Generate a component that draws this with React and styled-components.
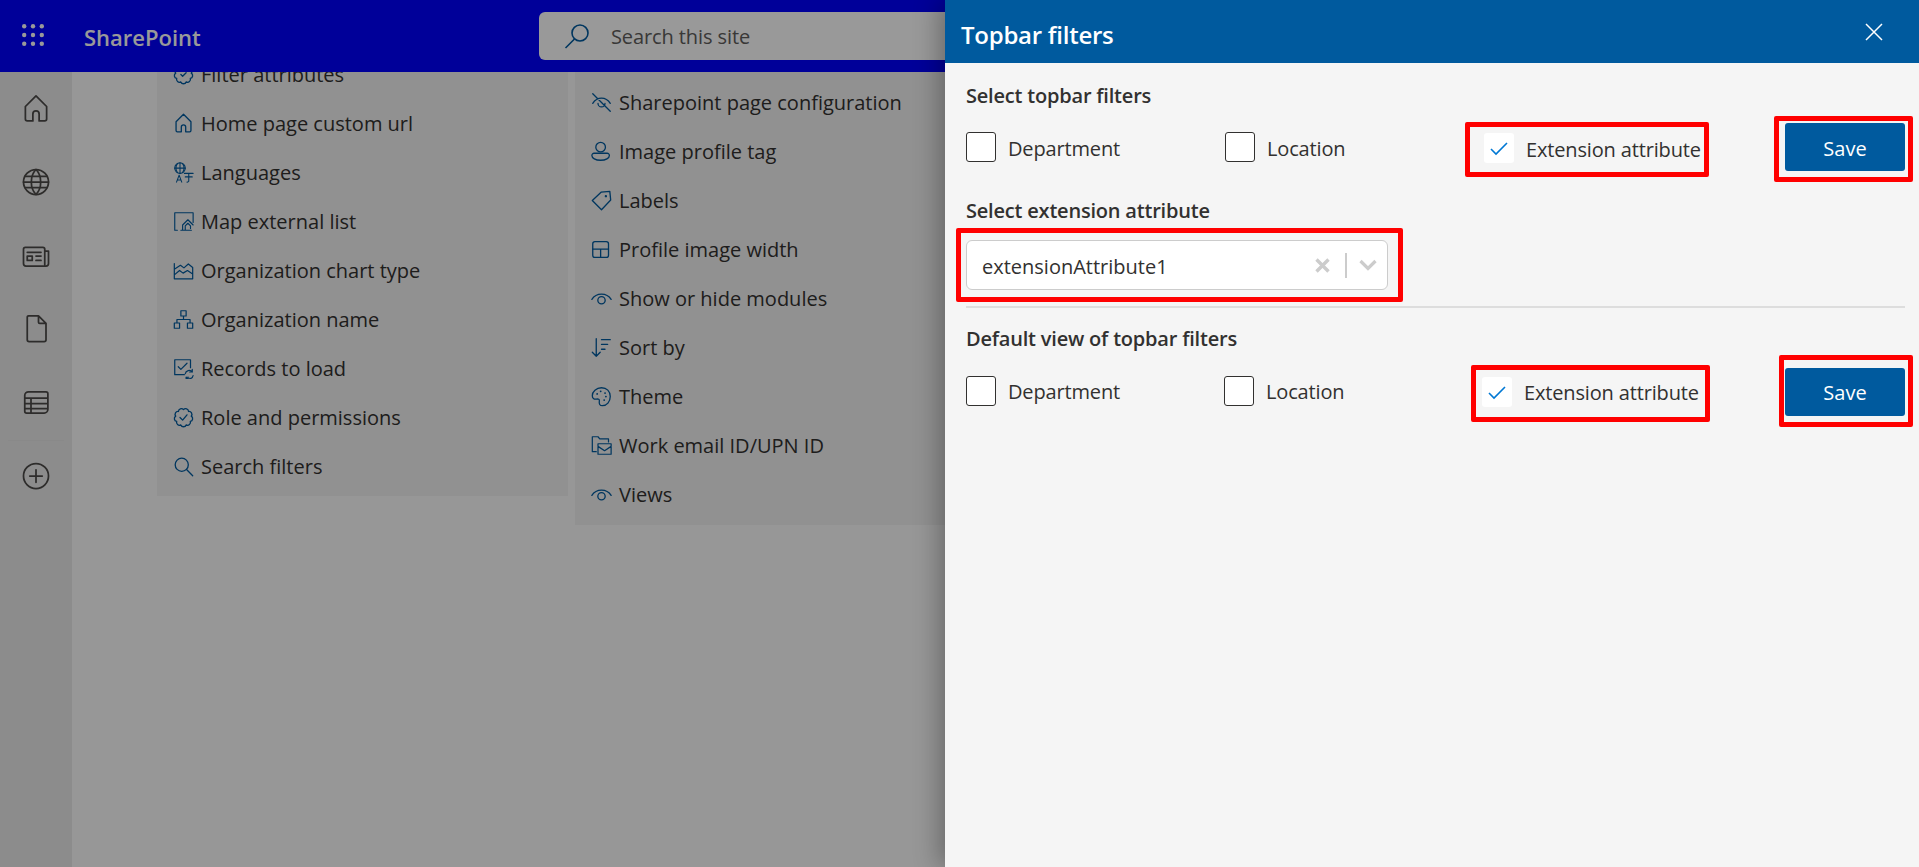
import React from 'react';
import styled, { createGlobalStyle } from 'styled-components';

const Global = createGlobalStyle`
  html, body { margin: 0; padding: 0; height: 100%; overflow: hidden; }
  body { font-family: 'Open Sans', 'Noto Sans', Arial, sans-serif; color: #323130; background: #fcfcfc; }
  * { box-sizing: border-box; }
`;

const Page = styled.div`
  position: relative;
  width: 1919px;
  height: 867px;
  overflow: hidden;
  display: flex;
  flex-direction: column;
`;

const TopBar = styled.header`
  height: 72px;
  flex: none;
  background: #0000ff;
  display: flex;
  align-items: center;
  position: relative;
  z-index: 1;
`;

const Waffle = styled.div`
  width: 84px;
  padding-left: 22px;
  svg { display: block; margin-top: -2px; }
`;

const Brand = styled.div`
  width: 455px;
  color: #fff;
  font-size: 22px;
  font-weight: 600;
  padding-top: 1px;
`;

const SearchBox = styled.div`
  width: 560px;
  height: 48px;
  background: #fff;
  border-radius: 6px;
  display: flex;
  align-items: center;
  gap: 21px;
  padding-left: 25px;
  color: #605e5c;
  font-size: 20px;
  letter-spacing: -0.1px;
  svg { flex: none; }
`;

const Body = styled.div`
  flex: 1;
  display: flex;
  min-height: 0;
`;

const Rail = styled.nav`
  width: 72px;
  flex: none;
  background: #eaeaea;
  display: flex;
  flex-direction: column;
  align-items: center;
`;

const RailIcon = styled.div`
  width: 72px;
  height: 73.5px;
  display: flex;
  align-items: center;
  justify-content: center;
  color: #4c4a48;
`;

const RailRule = styled.div`
  width: 56px;
  height: 1px;
  background: #e4e4e4;
  margin-bottom: -1px;
`;

const Main = styled.main`
  flex: 1;
  display: flex;
  align-items: flex-start;
  gap: 7px;
  padding-left: 85px;
`;

const Card = styled.section`
  width: ${p => p.$width}px;
  margin-top: ${p => p.$top}px;
  padding: ${p => p.$padTop}px 0 ${p => p.$padBottom}px 16px;
  background: #f2f2f2;
`;

const Item = styled.div`
  height: 49px;
  display: flex;
  align-items: center;
  gap: 7px;
  font-size: 20px;
  white-space: nowrap;
  color: #323130;
  svg { flex: none; color: #005a9e; }
`;

const Overlay = styled.div`
  position: absolute;
  inset: 0;
  z-index: 2;
  background: rgba(0, 0, 0, 0.4);
`;

const Panel = styled.aside`
  position: absolute;
  top: 0;
  right: 0;
  bottom: 0;
  width: 974px;
  z-index: 3;
  background: #f5f5f5;
  box-shadow: -6px 0 24px rgba(0, 0, 0, 0.3);
`;

const PanelHeader = styled.div`
  height: 63px;
  background: #005a9e;
  color: #fff;
  display: flex;
  align-items: center;
  justify-content: space-between;
  padding: 0 36px 0 16px;
  h1 {
    margin: 6px 0 0;
    font-size: 24px;
    font-weight: 600;
    letter-spacing: -0.25px;
  }
  svg { display: block; margin-top: 1px; }
`;

const PanelBody = styled.div`
  padding: 18px 14px 0 21px;
`;

const Heading = styled.h2`
  margin: ${p => p.$top || 0}px 0 ${p => p.$bottom || 0}px;
  padding-top: ${p => p.$nudge || 0}px;
  font-size: 20px;
  line-height: 28px;
  font-weight: 600;
  letter-spacing: -0.2px;
  color: #323130;
`;

const Row = styled.div`
  display: flex;
  align-items: flex-start;
  margin-right: -8px;
`;

const CheckLabel = styled.label`
  width: ${p => (p.$width ? `${p.$width}px` : 'auto')};
  margin-top: ${p => p.$top || 0}px;
  display: flex;
  align-items: center;
  gap: 12px;
  font-size: 20px;
  letter-spacing: -0.15px;
  white-space: nowrap;
  color: #323130;
`;

const CheckText = styled.span`
  padding-top: 2px;
`;

const Box = styled.span`
  width: 30px;
  height: 30px;
  flex: none;
  background: #fff;
  border-radius: 3px;
  border: ${p => (p.$checked ? 'none' : '1px solid #323130')};
  display: flex;
  align-items: center;
  justify-content: center;
`;

// red annotation frames drawn round the controls
const Highlight = styled.div`
  border: 5px solid #ff0000;
  border-radius: 2px;
  padding: ${p => p.$pad};
  width: ${p => (p.$width ? `${p.$width}px` : 'auto')};
  margin: ${p => p.$margin || 0};
  flex: none;
`;

const SaveButton = styled.button`
  display: block;
  width: 120px;
  height: 48px;
  padding: 2px 0 0;
  border: none;
  border-radius: 3px;
  background: #005a9e;
  color: #fff;
  font-family: inherit;
  font-size: 20px;
`;

const SelectBox = styled.div`
  width: 422px;
  height: 50px;
  background: #fff;
  border: 1px solid #ccc;
  border-radius: 6px;
  display: flex;
  align-items: center;
  padding: 0 10px 0 15px;
  font-size: 20px;
  color: #323130;
`;

const SelectValue = styled.span`
  flex: 1;
  padding-top: 2px;
`;

const SelectSep = styled.span`
  width: 2px;
  height: 25px;
  background: #ccc;
  margin: 0 12px 0 15px;
`;

const Divider = styled.hr`
  margin: 4px 0 0;
  border: none;
  height: 1.5px;
  background: #ddd;
`;

const Svg = ({ size = 24, sw = 1.5, children, view = '0 0 24 24' }) => (
  <svg width={size} height={size} viewBox={view} fill="none" stroke="currentColor" strokeWidth={sw} strokeLinecap="round" strokeLinejoin="round">
    {children}
  </svg>
);

const homeD = 'M5 21.500h4.500v-5.500a2.500 2.500 0 0 1 5 0v5.500H19a1.500 1.500 0 0 0 1.500-1.500V10L12 1.500 3.500 10v10A1.500 1.500 0 0 0 5 21.500z';

// scalloped seal outline for the gear style badges
const gearD = (() => {
  const n = 9;
  const pts = Array.from({ length: n }, (_, i) => {
    const a = (i / n) * Math.PI * 2 - Math.PI / 2;
    return [12 + 9 * Math.cos(a), 12 + 9 * Math.sin(a)];
  });
  return pts
    .map(([x, y], i) => `${i === 0 ? 'M' : 'A3.300 3.300 0 0 1 '}${x.toFixed(2)} ${y.toFixed(2)}`)
    .join(' ') + ` A3.300 3.300 0 0 1 ${pts[0][0].toFixed(2)} ${pts[0][1].toFixed(2)}z`;
})();

const eyeIcon = (
  <Svg><path d="M1 13c2.500-4 6-6 11-6s8.500 2 11 6" /><circle cx="12" cy="14" r="4.200" /></Svg>
);

const leftItems = [
  ['Filter attributes', <Svg key="a"><path d={gearD} /><path d="M9 12l2 2 4-4" /></Svg>],
  ['Home page custom url', <Svg key="b"><path d={homeD} /></Svg>],
  ['Languages', <Svg key="c" sw={1.2}><circle cx="8" cy="7" r="6" /><path d="M2 7h12M8 1v12M5 2c-2 3-2 7 0 10M11 2c2 3 2 7 0 10" /><path d="M4 23l3-8 3 8M5 20.500h4M13 13h10M18 13v9a2 2 0 0 1-2 1M14 17h8" /></Svg>],
  ['Map external list', <Svg key="d" sw={1.3}><path d="M5 22H2V2h21v11" /><path d="M9 22h12M11 22v-6l6-6 6 6M14 22v-5l3-3 3 3v3" /></Svg>],
  ['Organization chart type', <Svg key="e" sw={1.4}><path d="M1.500 21.500h21v-13l-5-4-5 4.500-4-3-7 4.500zM1.500 4v17.500M1.500 17l6-5 4 3 5-3 6 4" /></Svg>],
  ['Organization name', <Svg key="f" sw={1.4}><path d="M9 2h6v6H9zM1.500 16h6v6h-6zM16.500 16h6v6h-6zM12 8v4M4.500 16v-4h15v4" /></Svg>],
  ['Records to load', <Svg key="g" sw={1.4}><path d="M13 19H2V2h18v9" /><path d="M6 10l3 3 7-7" /><path d="M14 18a4.500 4.500 0 0 1 8-2M23 20a4.500 4.500 0 0 1-8 2M22 13v3h-3M15 25v-3h3" /></Svg>],
  ['Role and permissions', <Svg key="h"><path d={gearD} /><path d="M8 12l3 3 5-6" /></Svg>],
  ['Search filters', <Svg key="i"><circle cx="10" cy="10" r="7.500" /><path d="M15.500 15.500l7 7" /></Svg>],
];

const rightItems = [
  ['Sharepoint page configuration', <Svg key="a"><path d="M2 13c2.500-4 6-6 10-6s7.500 2 10 6M8 13a4 4 0 0 0 8 0M2 2l20 20" /></Svg>],
  ['Image profile tag', <Svg key="b"><circle cx="11" cy="7" r="5.500" /><path d="M3.500 14h15a2.500 2.500 0 0 1 2.500 2.500c0 3-4 5.500-10 5.500S1 19.500 1 16.500A2.500 2.500 0 0 1 3.500 14z" /></Svg>],
  ['Labels', <Svg key="c"><path d="M12 22.500L1.500 12 11.500 2.500 21.500 1.500 22.500 11.500z" /><circle cx="17" cy="7" r="0.600" /></Svg>],
  ['Profile image width', <Svg key="d"><rect x="2" y="3" width="18" height="18" rx="2.500" /><path d="M2 11.500h18M11 11.500V21" /></Svg>],
  ['Show or hide modules', eyeIcon],
  ['Sort by', <Svg key="f"><path d="M6 2v20M1.500 17.500L6 22l4.500-4.500M12 3h10M12 8.500h7M12 14h4" /></Svg>],
  ['Theme', <Svg key="g"><path d="M12 2C6 2 1.500 6.500 1.500 11c0 3 2 4.500 4.500 4 2.500-.4 4 0 3.500 2.500-.5 3 .5 5 3.500 5 5 0 9-4.500 9-10.500S18 2 12 2z" /><path d="M7 9h.1M11 6h.1M16 8h.1M17 12h.1M15 16h.1" strokeWidth="2" /></Svg>],
  ['Work email ID/UPN ID', <Svg key="h" sw={1.4}><path d="M6 19H1.500V2H8l2 2.500h10V8" /><path d="M8 10h15v12H8zM8 13l7.500 5 7.500-5" /></Svg>],
  ['Views', eyeIcon],
];

const CheckMark = () => (
  <svg width="30" height="30" viewBox="0 0 30 30" fill="none" stroke="#0078d4" strokeWidth="1.6">
    <path d="M7 16l5 5 11-11" />
  </svg>
);

const Check = ({ label, width, top, checked }) => (
  <CheckLabel $width={width} $top={top}>
    <Box $checked={checked}>{checked && <CheckMark />}</Box>
    <CheckText>{label}</CheckText>
  </CheckLabel>
);

export default function App() {
  return (
    <Page>
      <Global />
      <TopBar>
        <Waffle>
          <svg width="22" height="22" viewBox="0 0 22 22" fill="#fff">
            {[2.2, 11, 19.8].map(y => [2.2, 11, 19.8].map(x => <circle key={`${x}-${y}`} cx={x} cy={y} r="2.200" />))}
          </svg>
        </Waffle>
        <Brand>SharePoint</Brand>
        <SearchBox>
          <svg width="26" height="26" viewBox="0 0 26 26" fill="none" stroke="#005a9e" strokeWidth="1.6">
            <circle cx="16" cy="10" r="8" />
            <path d="M10.500 16L1.500 25" />
          </svg>
          Search this site
        </SearchBox>
      </TopBar>
      <Body>
        <Rail>
          <RailIcon><Svg size={30} sw={1.4}><path d={homeD} /></Svg></RailIcon>
          <RailIcon>
            <Svg size={30} sw={1.4}>
              <circle cx="12" cy="12" r="10" />
              <path d="M2 12h20M3.500 7.500h17M3.500 16.500h17M12 2c-5 5-5 15 0 20M12 2c5 5 5 15 0 20" />
            </Svg>
          </RailIcon>
          <RailIcon>
            <Svg size={30} sw={1.4}>
              <path d="M19 19V6.500A1.500 1.500 0 0 0 17.500 5h-14A1.500 1.500 0 0 0 2 6.500V18a2 2 0 0 0 2 2h16a2 2 0 0 0 2-2V8h-3" />
              <path d="M5 9h11M5 12h4v3.500H5zM12 12h4M12 15.500h4" />
            </Svg>
          </RailIcon>
          <RailIcon>
            <Svg size={30} sw={1.4}>
              <path d="M6 1.500h8l6 6v13a1.500 1.500 0 0 1-1.500 1.500h-12A1.500 1.500 0 0 1 5 20.500V2.500a1 1 0 0 1 1-1zM14 1.500v5a1 1 0 0 0 1 1h5" />
            </Svg>
          </RailIcon>
          <RailIcon>
            <Svg size={30} sw={1.4}>
              <path d="M6 3h14a1.500 1.500 0 0 1 1.500 1.500V17a3 3 0 0 1-3 3H4.500A1.500 1.500 0 0 1 3 18.500V6a3 3 0 0 1 3-3zM3 8h18.500M3 12.500h18.500M3 16.500h18.500M8 8v12" />
            </Svg>
          </RailIcon>
          <RailRule />
          <RailIcon>
            <Svg size={30} sw={1.4}>
              <circle cx="12" cy="12" r="10" />
              <path d="M12 7v10M7 12h10" />
            </Svg>
          </RailIcon>
        </Rail>
        <Main>
          <Card $width={411} $top={-24} $padTop={2} $padBottom={5}>
            {leftItems.map(([label, icon]) => (
              <Item key={label}>{React.cloneElement(icon, { size: 21 })}{label}</Item>
            ))}
          </Card>
          <Card $width={400} $top={0} $padTop={6} $padBottom={6}>
            {rightItems.map(([label, icon]) => (
              <Item key={label}>{React.cloneElement(icon, { size: 21 })}{label}</Item>
            ))}
          </Card>
        </Main>
      </Body>
      <Overlay />
      <Panel>
        <PanelHeader>
          <h1>Topbar filters</h1>
          <svg width="18" height="18" viewBox="0 0 18 18" stroke="#fff" strokeWidth="1.5">
            <path d="M1 1l16 16M17 1L1 17" />
          </svg>
        </PanelHeader>
        <PanelBody>
          <Heading $nudge={1} $bottom={6}>Select topbar filters</Heading>
          <Row>
            <Check label="Department" width={259} top={16} />
            <Check label="Location" width={240} top={16} />
            <Highlight $width={244} $pad="6px 0 9px 14px" $margin="6px 0 0">
              <Check label="Extension attribute" checked />
            </Highlight>
            <Highlight $pad="2px 3px 6px 6px" $margin="0 0 0 auto">
              <SaveButton>Save</SaveButton>
            </Highlight>
          </Row>
          <Heading $top={15} $bottom={3}>Select extension attribute</Heading>
          <Highlight $pad="7px 10px 7px 5px" $width={447} $margin="0 0 0 -10px">
            <SelectBox>
              <SelectValue>extensionAttribute1</SelectValue>
              <svg width="15" height="15" viewBox="0 0 15 15" stroke="#ccc" strokeWidth="3.400">
                <path d="M1.500 1.500l12 12M13.500 1.500l-12 12" />
              </svg>
              <SelectSep />
              <svg width="18" height="12" viewBox="0 0 18 12" fill="none" stroke="#ccc" strokeWidth="3.200">
                <path d="M1.500 2L9 9.500 16.500 2" />
              </svg>
            </SelectBox>
          </Highlight>
          <Divider />
          <Heading $top={17} $bottom={2}>Default view of topbar filters</Heading>
          <Row>
            <Check label="Department" width={258} top={21} />
            <Check label="Location" width={247} top={21} />
            <Highlight $width={239} $pad="7px 0 10px 6px" $margin="10px 0 0">
              <Check label="Extension attribute" checked />
            </Highlight>
            <Highlight $pad="8px 3px 6px 1px" $margin="0 0 0 auto">
              <SaveButton>Save</SaveButton>
            </Highlight>
          </Row>
        </PanelBody>
      </Panel>
    </Page>
  );
}
